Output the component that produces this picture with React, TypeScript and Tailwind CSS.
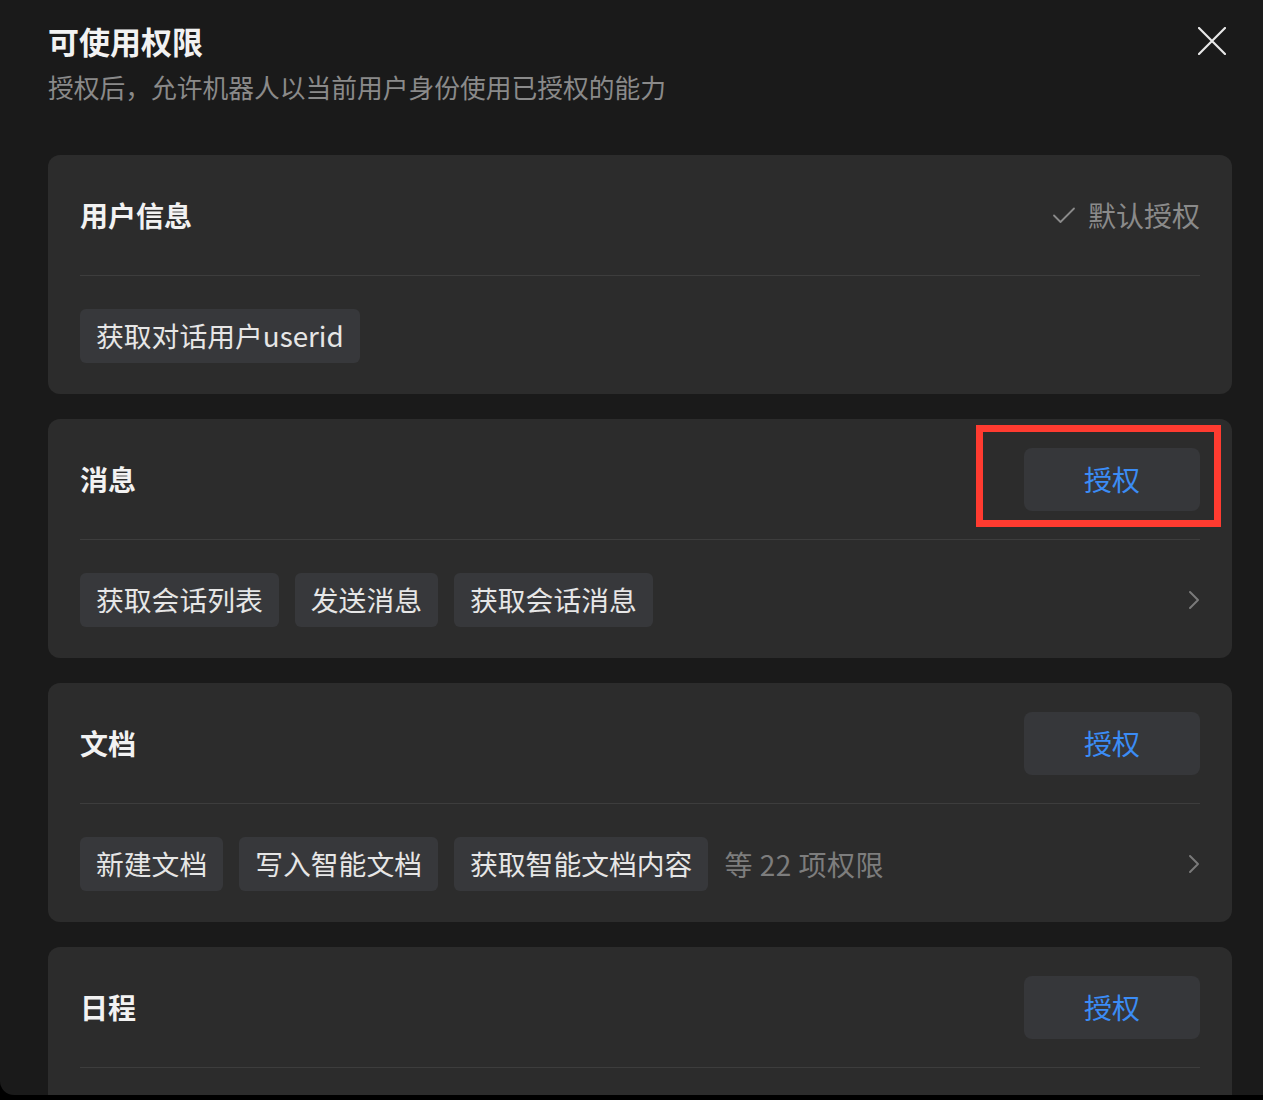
import React from "react";

type Section = {
  title: string;
  tags: string[];
  more?: string;
  granted?: boolean;
  highlight?: boolean;
};

const sections: Section[] = [
  { title: "用户信息", tags: ["获取对话用户userid"], granted: true },
  {
    title: "消息",
    tags: ["获取会话列表", "发送消息", "获取会话消息"],
    highlight: true,
  },
  {
    title: "文档",
    tags: ["新建文档", "写入智能文档", "获取智能文档内容"],
    more: "等 22 项权限",
  },
  { title: "日程", tags: [] },
];

const font = { fontFamily: '"Noto Sans CJK SC", "Noto Sans", sans-serif' };

const CheckIcon = () => (
  <svg width="24" height="20" viewBox="0 0 24 20" fill="none">
    <path
      d="M2 10.5 L8.5 17 L22 3.5"
      stroke="#8a8a8a"
      strokeWidth="1.8"
      strokeLinecap="round"
      strokeLinejoin="round"
    />
  </svg>
);

const Chevron = () => (
  <svg width="12" height="20" viewBox="0 0 12 20" fill="none">
    <path
      d="M2 2 L10 10 L2 18"
      stroke="#7a7a7a"
      strokeWidth="2"
      strokeLinecap="round"
      strokeLinejoin="round"
    />
  </svg>
);

const CloseIcon = () => (
  <svg width="28" height="28" viewBox="0 0 28 28" fill="none">
    <path
      d="M1 1 L27 27 M27 1 L1 27"
      stroke="#e8e8e8"
      strokeWidth="2.2"
      strokeLinecap="round"
    />
  </svg>
);

const Card = ({ s }: { s: Section }) => (
  <div className="relative bg-[#2c2c2c] rounded-[12px] px-[32px] shrink-0">
    {/* 标注框 */}
    {s.highlight && (
      <div className="absolute left-[928px] top-[6px] w-[245px] h-[102px] border-[7px] border-[#ff3b30] pointer-events-none" />
    )}
    <div className="h-[121px] flex items-center justify-between border-b border-[#3d3d3d]">
      <span className="text-[28px] font-bold text-[#f2f2f2] leading-none">
        {s.title}
      </span>
      {s.granted ? (
        <div className="flex items-center gap-[12px] text-[28px] text-[#8a8a8a] leading-none">
          <CheckIcon />
          <span>默认授权</span>
        </div>
      ) : (
        <button className="w-[176px] h-[63px] rounded-[8px] bg-[#36373a] text-[28px] text-[#3b8cf5] leading-none">
          授权
        </button>
      )}
    </div>
    <div className="pt-[33px] pb-[31px] h-[118px] flex items-center">
      <div className="flex items-center gap-[16px] flex-1">
        {s.tags.map((t) => (
          <span
            key={t}
            className="h-[54px] px-[16px] flex items-center rounded-[6px] bg-[#37383b] text-[27.8px] text-[#e6e6e6] leading-none"
          >
            {t}
          </span>
        ))}
        {s.more && (
          <span className="text-[28px] tracking-[0.5px] text-[#7d7d7d] leading-none">
            {s.more}
          </span>
        )}
      </div>
      {!s.granted && <Chevron />}
    </div>
  </div>
);

export default function App() {
  return (
    <div className="w-[1263px] h-[1100px] bg-black overflow-hidden" style={font}>
      <div className="relative h-[1095px] bg-[#1a1a1a] rounded-bl-[14px] overflow-hidden pl-[48px] pr-[31px]">
        <button className="absolute right-[37px] top-[27px]">
          <CloseIcon />
        </button>
        <div className="pt-[21px]">
          <h1 className="text-[31px] font-bold text-[#f2f2f2] leading-[40px]">
            可使用权限
          </h1>
          <p className="mt-[8px] text-[25.75px] text-[#8a8a8a] leading-[36px]">
            授权后，允许机器人以当前用户身份使用已授权的能力
          </p>
        </div>
        <div className="mt-[50px] flex flex-col gap-[25px]">
          {sections.map((s) => (
            <Card key={s.title} s={s} />
          ))}
        </div>
      </div>
    </div>
  );
}
